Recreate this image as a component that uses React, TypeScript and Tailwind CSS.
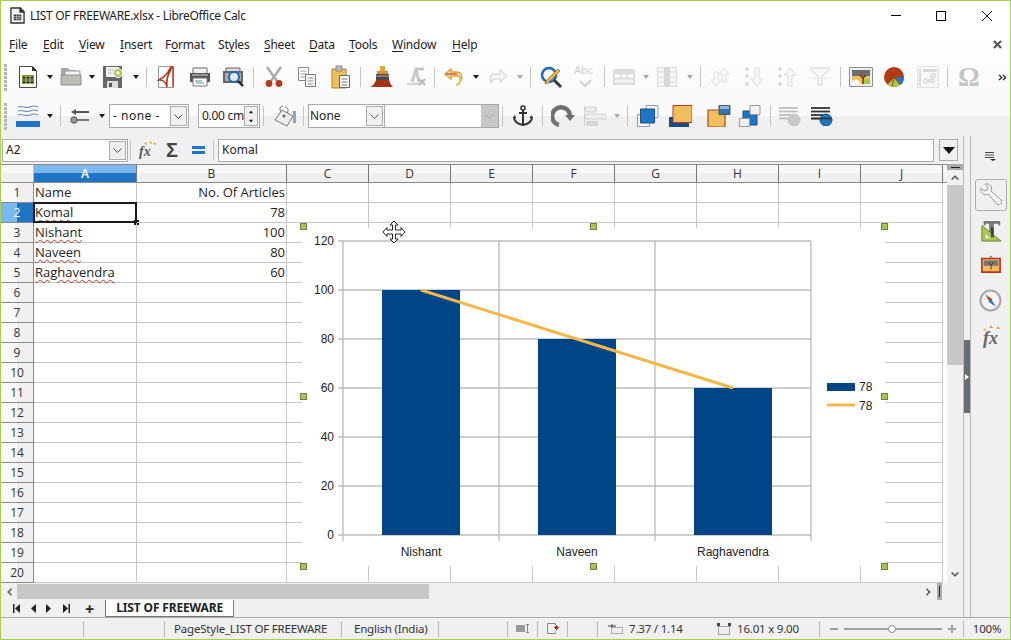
import React from "react";

type P = { className?: string };

const ui = "font-['Noto_Sans','Open_Sans',sans-serif]";

function Caret({ className = "", off = false }: P & { off?: boolean }) {
  return (
    <svg viewBox="0 0 6 4" className={`w-[6px] h-[4px] shrink-0 ${className}`}>
      <path d="M0 0h6L3 4z" fill={off ? "#a8a8a8" : "#1a1a1a"} />
    </svg>
  );
}

function Sep({ className = "" }: P) {
  return <div className={`w-px h-[20px] bg-[#c4c4c4] shrink-0 ${className}`} />;
}

function Grip() {
  return (
    <div className="flex flex-col gap-[1px] w-[3px] ml-[3px] shrink-0">
      {[0, 1, 2, 3, 4, 5, 6].map((i) => (
        <div key={i} className="h-[3px] bg-[#b5b5b5]" />
      ))}
    </div>
  );
}

function Ico({ className = "", vb = "0 0 24 24", children }: P & { vb?: string; children: React.ReactNode }) {
  return (
    <svg viewBox={vb} className={`shrink-0 ${className}`}>
      {children}
    </svg>
  );
}

// toolbar 1
const NewDoc = ({ className }: P) => (
  <Ico className={className} vb="0 0 20 24">
    <path d="M1.5 1.5h13l4 4v17h-17z" fill="#fff" stroke="#4a4a4a" />
    <path d="M14 1l5 5h-5z" fill="#333" />
    <path d="M4 10h12v9H4z" fill="#7b9a2e" />
    <path d="M5 12h10v6H5z" fill="#222" />
    <path d="M5 14h10M5 16h10M8 11v8M12 11v8" stroke="#cfe08f" strokeWidth=".8" />
  </Ico>
);
const Folder = ({ className }: P) => (
  <Ico className={className} vb="0 0 22 22">
    <path d="M1 2h7l2 2h6v14H1z" fill="#a8a8a8" />
    <path d="M5 5h15v6H5z" fill="#f4f4f4" stroke="#9a9a9a" />
    <path d="M1 9h20v10H1z" fill="#bcbcb4" stroke="#8f8f8f" />
  </Ico>
);
const Save = ({ className }: P) => (
  <Ico className={className} vb="0 0 24 24">
    <path d="M1 1h19v22H1z" fill="#666" />
    <path d="M4 2h13v10H4z" fill="#f2f2f2" />
    <path d="M6 5h9M6 8h5" stroke="#bbb" />
    <path d="M5 16h11v7H5z" fill="#ddd" />
    <path d="M7 18h3v4H7z" fill="#555" />
    <circle cx="16" cy="8" r="4.5" fill="#a6c84a" stroke="#fff" />
    <circle cx="16" cy="8" r="1.8" fill="#fff" />
  </Ico>
);
const Pdf = ({ className }: P) => (
  <Ico className={className} vb="0 0 20 24">
    <path d="M1.5 1.5h15v21h-15z" fill="#fff" stroke="#999" />
    <path d="M14 2C10 9 9 11 2 15c5 0 7 2 8 7-1-8 1-12 5-20z" fill="#fbeee8" stroke="#b1351a" strokeWidth="1.6" />
    <path d="M16 2v20" stroke="#c8391a" strokeWidth="1.5" />
  </Ico>
);
const Printer = ({ className }: P) => (
  <Ico className={className} vb="0 0 22 22">
    <path d="M4 2h14v7H4z" fill="#f3f3f3" stroke="#666" />
    <path d="M1 7h20v9H1z" fill="#555" />
    <path d="M3 8h16v2H3z" fill="#999" />
    <path d="M4 12h14v8H4z" fill="#fff" stroke="#777" />
    <path d="M6 15h7M7 17h8" stroke="#5d8f9e" />
  </Ico>
);
const Preview = ({ className }: P) => (
  <Ico className={className} vb="0 0 22 22">
    <path d="M4 2h14v6H4z" fill="#ddd" stroke="#666" />
    <path d="M1 5h20v12H1z" fill="#666" />
    <path d="M3 7h16v8H3z" fill="#a9a9a9" />
    <circle cx="12" cy="11" r="5" fill="#dfeaf2" stroke="#1d6cb5" strokeWidth="2" />
    <path d="M16 15l5 5" stroke="#222" strokeWidth="2.4" />
  </Ico>
);
const Scissors = ({ className }: P) => (
  <Ico className={className} vb="0 0 20 22">
    <path d="M3 1l10 14M17 1L7 15" stroke="#a9a9a9" strokeWidth="2.4" />
    <circle cx="5" cy="17.5" r="3.4" fill="#b6391a" />
    <circle cx="15" cy="17.5" r="3.4" fill="#b6391a" />
  </Ico>
);
const Copy = ({ className }: P) => (
  <Ico className={className} vb="0 0 20 22">
    <path d="M1.5 1.5h10v13h-10z" fill="#fff" stroke="#8a8a8a" />
    <path d="M3.5 5h6M3.5 8h6M3.5 11h6" stroke="#9a9a9a" />
    <path d="M8.5 8.5h10v12h-10z" fill="#fff" stroke="#777" />
    <path d="M10.5 12h6M10.5 15h6M10.5 18h6" stroke="#888" />
  </Ico>
);
const Paste = ({ className }: P) => (
  <Ico className={className} vb="0 0 20 24">
    <path d="M1 4h14v19H1z" fill="#f2bd5b" stroke="#b8862c" />
    <path d="M5 1h6v5H5z" fill="#bbb" stroke="#888" />
    <path d="M8.5 10.5h10v12h-10z" fill="#fff" stroke="#666" />
    <path d="M10.5 14h6M10.5 17h6M10.5 20h6" stroke="#777" />
  </Ico>
);
const Brush = ({ className }: P) => (
  <Ico className={className} vb="0 0 24 24">
    <path d="M10 1h5v5h-5z" fill="#e5a63c" />
    <path d="M7 6h11v3H7z" fill="#d98f2e" />
    <path d="M6 9h13v6H6z" fill="#4a4a4a" />
    <path d="M6 11h13" stroke="#aaa" />
    <path d="M6 15h13c1 3 2 5 4 7H0c3-1 5-4 6-7z" fill="#a83215" />
  </Ico>
);
const ClearFmt = ({ className }: P) => (
  <Ico className={className} vb="0 0 22 22">
    <path d="M7 16L11 3h8M11 3l3 13" stroke="#c8c8c8" strokeWidth="3" fill="none" />
    <path d="M2 18h12" stroke="#d4d4d4" strokeWidth="2.5" />
    <path d="M14 13l6 6M20 13l-6 6" stroke="#bbb" strokeWidth="2.4" />
  </Ico>
);
const Undo = ({ className }: P) => (
  <Ico className={className} vb="0 0 22 22">
    <path d="M8 3L2 8l6 5V10h6c3 0 4 2 4 5 2-4 1-9-5-9H8z" fill="#fbe7b8" stroke="#e0a23a" strokeWidth="1.4" />
    <path d="M3 8h11" stroke="#c8391a" strokeWidth="1.2" />
    <path d="M17 12a5 5 0 0 1-4 7" stroke="#dfc04a" strokeWidth="2" fill="none" />
  </Ico>
);
const Redo = ({ className }: P) => (
  <Ico className={className} vb="0 0 22 22">
    <path d="M13 4l7 6-7 6v-3H8c-2 0-3 1-4 4-2-4-1-9 4-9h5z" fill="#f5f5f5" stroke="#dedede" strokeWidth="1.4" />
  </Ico>
);
const Find = ({ className }: P) => (
  <Ico className={className} vb="0 0 22 22">
    <circle cx="9" cy="9" r="7" fill="#f7fafc" stroke="#1d6cb5" strokeWidth="2.6" />
    <path d="M14 14l7 7" stroke="#333" strokeWidth="2.8" />
    <path d="M6 15L18 3l2 2L8 17l-3 1z" fill="#f0b545" stroke="#9c6b1d" strokeWidth=".8" />
  </Ico>
);
const Spell = ({ className }: P) => (
  <div className={`relative shrink-0 ${className}`}>
    <span className="absolute top-[-1px] left-0 font-['Liberation_Sans',sans-serif] text-[11px] leading-none text-[#cfcfcf]">Abc</span>
    <svg viewBox="0 0 22 10" className="absolute left-0 bottom-0 w-[22px] h-[10px]">
      <path d="M6 3l5 5 6-6" stroke="#d0d0d0" strokeWidth="2" fill="none" />
    </svg>
  </div>
);
const RowsIco = ({ className }: P) => (
  <Ico className={className} vb="0 0 22 16">
    <path d="M0 0h22v16H0z" fill="#dcdcdc" />
    <path d="M2 5.5h5v3H2zM8.5 5.5h5v3h-5zM15 5.5h5v3h-5z" fill="#fff" />
    <path d="M2 10.5h18v3H2z" fill="#f4f4f4" />
  </Ico>
);
const ColsIco = ({ className }: P) => (
  <Ico className={className} vb="0 0 20 20">
    <path d="M.5 .5h19v19H.5z" fill="#f6f6f6" stroke="#dadada" />
    <path d="M7 0h6v20H7z" fill="#d8d8d8" />
    <path d="M0 5h20M0 10h20M0 15h20" stroke="#dadada" />
  </Ico>
);
const SortAB = ({ className }: P) => (
  <Ico className={className} vb="0 0 20 20">
    <path d="M6 19l-5-6h3V5h4v8h3zM14 1l5 6h-3v8h-4V7H9z" fill="#f8f8f8" stroke="#dedede" />
  </Ico>
);
const SortOne = ({ className, up = false }: P & { up?: boolean }) => (
  <Ico className={className} vb="0 0 20 22">
    <circle cx="3" cy="3" r="2" fill="#dcdcdc" />
    <circle cx="3" cy="10" r="2" fill="#dcdcdc" />
    <circle cx="3" cy="18" r="2" fill="#dcdcdc" />
    <path d={up ? "M13 2l6 7h-4v11h-4V9H7z" : "M13 20l6-7h-4V2h-4v11H7z"} fill="#f8f8f8" stroke="#dedede" />
  </Ico>
);
const Funnel = ({ className }: P) => (
  <Ico className={className} vb="0 0 22 20">
    <path d="M1 1h20l-8 9v8h-4v-8z" fill="#f8f8f8" stroke="#d4d4d4" />
    <path d="M0 11h22" stroke="#ccc" strokeDasharray="1 2" />
  </Ico>
);
const ImageIco = ({ className }: P) => (
  <Ico className={className} vb="0 0 24 20">
    <path d="M.5 .5h23v19H.5z" fill="#eee" stroke="#8f8f8f" />
    <path d="M3 3h18v14H3z" fill="#6d6d6d" />
    <path d="M3 9h18v8H3z" fill="#f2bd5b" />
    <path d="M3 14l5-2 4 5H3z" fill="#fff" />
    <path d="M14 17V11l-3-3M14 11l3-3" stroke="#7b2410" strokeWidth="1.5" fill="none" />
    <path d="M15 12h6v5h-6z" fill="#a6c84a" />
  </Ico>
);
const Pie = ({ className }: P) => (
  <Ico className={className} vb="0 0 20 20">
    <circle cx="10" cy="10" r="10" fill="#b23a14" />
    <path d="M11 10h9c0 3-1 6-3 8z" fill="#2574c0" />
    <path d="M10 11l6 7c-3 2-5 2-7 2z" fill="#a6c84a" />
    <path d="M9 12l-1 8-5-2z" fill="#a6c84a" />
  </Ico>
);
const Pivot = ({ className }: P) => (
  <Ico className={className} vb="0 0 22 22">
    <path d="M.5 .5h21v21H.5z" fill="#f7f7f7" stroke="#e0e0e0" />
    <path d="M6 3h14v3H6zM2 3h2v17H2z" fill="#dcdcdc" />
    <path d="M9 18l-3-3 3-3v2h6v-4h-2l3-3 3 3h-2v6H9z" fill="#f4f4f4" stroke="#cfcfcf" />
  </Ico>
);

// toolbar 2
const Borders = ({ className }: P) => (
  <Ico className={className} vb="0 0 24 22">
    <path d="M2 2c4-2 8 2 12 0s6-1 8 0M2 6c4-2 8 2 12 0s6-1 8 0M2 10c4-2 8 2 12 0s6-1 8 0" stroke="#6b8bb0" strokeWidth="1.2" fill="none" />
    <path d="M0 16h24v6H0z" fill="#1f75c4" />
  </Ico>
);
const LineArrow = ({ className }: P) => (
  <Ico className={className} vb="0 0 20 16">
    <path d="M1 4l5-3v2h13v2H6v2z" fill="#555" />
    <path d="M6 11h13v2H6z" fill="#777" />
    <circle cx="4" cy="12" r="3.2" fill="#999" stroke="#555" />
  </Ico>
);
const Bucket = ({ className }: P) => (
  <Ico className={className} vb="0 0 24 24">
    <path d="M10 2c-3 0-4 3-2 6M12 3c3 0 4 3 2 6" stroke="#777" fill="none" />
    <path d="M9 6l11 6-6 10L2 16z" fill="#eee" stroke="#777" />
    <circle cx="11" cy="12" r="1.5" fill="#666" />
    <path d="M20 7h3v12h-3z" fill="#8ba7c4" />
  </Ico>
);
const Anchor = ({ className }: P) => (
  <Ico className={className} vb="0 0 20 22">
    <circle cx="10" cy="3" r="2" fill="none" stroke="#333" strokeWidth="1.6" />
    <path d="M10 5v15M6 8h8" stroke="#333" strokeWidth="2" />
    <path d="M1 12c0 5 4 7 9 8 5-1 9-3 9-8" stroke="#333" strokeWidth="2" fill="none" />
    <path d="M0 13l1.5-3 2 3zM20 13l-1.5-3-2 3z" fill="#333" />
  </Ico>
);
const Rotate = ({ className }: P) => (
  <Ico className={className} vb="0 0 24 22">
    <path d="M8 20A9 9 0 1 1 19 10" stroke="#6f6f6f" strokeWidth="4.4" fill="none" />
    <path d="M14 10h10l-5 6z" fill="#6f6f6f" />
  </Ico>
);
const AlignIco = ({ className }: P) => (
  <Ico className={className} vb="0 0 22 20">
    <path d="M.5 0v20" stroke="#d0d0d0" />
    <path d="M2 1h10v5H2z" fill="#eee" stroke="#cfcfcf" />
    <path d="M2 8h20v5H2z" fill="#eee" stroke="#cfcfcf" />
    <path d="M2 15h12v5H2z" fill="#d4d4d4" />
  </Ico>
);
const Front = ({ className }: P) => (
  <Ico className={className} vb="0 0 22 22">
    <path d="M9 .5h12v12H9zM.5 9.5h12v12H.5z" fill="#f4f4f4" stroke="#9a9a9a" />
    <path d="M3.5 4h14v14h-14z" fill="#1f75c4" stroke="#174f85" />
  </Ico>
);
const Forward = ({ className }: P) => (
  <Ico className={className} vb="0 0 24 22">
    <path d="M1 12h20v10H1z" fill="#174f85" />
    <path d="M5 .5h19v17H5z" fill="#f2bd5b" stroke="#b5401a" />
  </Ico>
);
const Backward = ({ className }: P) => (
  <Ico className={className} vb="0 0 24 22">
    <path d="M1 5h17v17H1z" fill="#f2bd5b" stroke="#b5401a" strokeWidth="1.2" />
    <path d="M12 .5h11v9H12z" fill="#2b75b5" stroke="#555" />
    <path d="M13 1h9v3h-9z" fill="#8bb8de" />
  </Ico>
);
const BackIco = ({ className }: P) => (
  <Ico className={className} vb="0 0 22 22">
    <path d="M4 6h14v14H4z" fill="#1f75c4" stroke="#174f85" />
    <path d="M11 .5h10v9H11zM.5 13.5h10v8H.5z" fill="#f2f2f2" stroke="#9a9a9a" />
  </Ico>
);
const TextRound = ({ className, on = false }: P & { on?: boolean }) => (
  <Ico className={className} vb="0 0 24 20">
    {[2, 5.5, 9, 12.5].map((y, i) => (
      <path key={i} d={`M0 ${y}h${i > 1 ? 13 : 19}`} stroke={on ? "#333" : "#bdbdbd"} strokeWidth="1.8" />
    ))}
    <circle cx="15" cy="14" r="6" fill={on ? "#1f75c4" : "#c8c8c8"} stroke={on ? "#174f85" : "#c8c8c8"} />
    {on && <path d="M0 12.5h20" stroke="#333" strokeWidth="1.6" />}
  </Ico>
);

const Chevron = ({ color = "#555" }: { color?: string }) => (
  <svg viewBox="0 0 9 5" className="w-[9px] h-[5px]">
    <path d="M.5 .5l4 4 4-4" stroke={color} fill="none" />
  </svg>
);

const menu = [
  ["w-[34px]", "", "F", "ile"],
  ["w-[36px]", "", "E", "dit"],
  ["w-[41px]", "", "V", "iew"],
  ["w-[45px]", "", "I", "nsert"],
  ["w-[53px]", "F", "o", "rmat"],
  ["w-[46px]", "St", "y", "les"],
  ["w-[45px]", "", "S", "heet"],
  ["w-[40px]", "", "D", "ata"],
  ["w-[43px]", "", "T", "ools"],
  ["w-[60px]", "", "W", "indow"],
  ["w-[40px]", "", "H", "elp"],
];

const colWidths = ["w-[103px]", "w-[150px]", "w-[82px]", "w-[82px]", "w-[82px]", "w-[82px]", "w-[82px]", "w-[82px]", "w-[82px]", "w-[82px]"];
const colNames = ["A", "B", "C", "D", "E", "F", "G", "H", "I", "J"];
const rowsData: Record<number, [string, string]> = {
  1: ["Name", "No. Of Articles"],
  2: ["Komal", "78"],
  3: ["Nishant", "100"],
  4: ["Naveen", "80"],
  5: ["Raghavendra", "60"],
};

function Chart() {
  const ys = [241, 290, 339, 388, 437, 486, 535];
  const labels = ["120", "100", "80", "60", "40", "20", "0"];
  return (
    <svg viewBox="302 228 583 338" className="w-[583px] h-[338px] block font-['Liberation_Sans',sans-serif]">
      {ys.map((y, i) => (
        <g key={y}>
          <path d={`M338 ${y}H811`} stroke="#bdbdbd" strokeWidth="1.5" />
          <text x="334" y={y + 4} textAnchor="end" fontSize="12" fill="#222">
            {labels[i]}
          </text>
        </g>
      ))}
      {[343, 499, 655, 811].map((x) => (
        <path key={x} d={`M${x} 241V541`} stroke="#b3b3b3" strokeWidth="1.2" />
      ))}
      <rect x="382" y="290" width="78" height="245" fill="#004586" />
      <rect x="538" y="339" width="78" height="196" fill="#004586" />
      <rect x="694" y="388" width="78" height="147" fill="#004586" />
      <path d="M421 290L733 388" stroke="#f2b84b" strokeWidth="3" />
      <text x="421" y="556" textAnchor="middle" fontSize="12" fill="#222">Nishant</text>
      <text x="577" y="556" textAnchor="middle" fontSize="12" fill="#222">Naveen</text>
      <text x="733" y="556" textAnchor="middle" fontSize="12" fill="#222">Raghavendra</text>
      <rect x="827" y="383" width="28" height="8" fill="#004586" />
      <path d="M827 405H855" stroke="#f2b84b" strokeWidth="3" />
      <text x="859" y="391" fontSize="12" fill="#222">78</text>
      <text x="859" y="410" fontSize="12" fill="#222">78</text>
    </svg>
  );
}

function Handle({ className = "" }: P) {
  return <div className={`absolute w-[7px] h-[7px] bg-[#a5c84a] border border-[#6f7f45] ${className}`} />;
}

export default function App() {
  return (
    <div className={`relative w-[1011px] h-[640px] overflow-hidden flex flex-col bg-white border border-[#a9cf4d] text-[#222] ${ui}`}>
      {/* title bar */}
      <div className="h-[29px] flex items-center shrink-0 relative">
        <svg viewBox="0 0 16 18" className="w-[15px] h-[17px] ml-[9px] shrink-0">
          <path d="M1 1h10l4 4v12H1z" fill="#f4f4f4" stroke="#333" strokeWidth="1.4" />
          <path d="M10 0l6 6h-6z" fill="#333" />
          <path d="M4 8h8v6H4z" fill="#333" />
          <path d="M4 10h8M4 12h8M7 8v6M9.5 8v6" stroke="#e8e8e8" strokeWidth=".6" />
        </svg>
        <span className="ml-[5px] text-[12px] tracking-[-0.3px]">LIST OF FREEWARE.xlsx - LibreOffice Calc</span>
        <div className="ml-auto flex items-center mr-[18px]">
          <div className="w-[10px] h-px bg-black" />
          <div className="ml-[35px] w-[10px] h-[10px] border border-black" />
          <svg viewBox="0 0 10 10" className="ml-[36px] w-[10px] h-[10px]">
            <path d="M0 0l10 10M10 0L0 10" stroke="#222" />
          </svg>
        </div>
      </div>

      {/* menu bar */}
      <div className="h-[28px] flex items-center shrink-0 pl-[8px] pt-px text-[12px] tracking-[-0.2px] bg-[linear-gradient(#fff,#fdfdfd)]">
        {menu.map(([w, a, u, b]) => (
          <div key={u + b} className={w}>
            {a}
            <span className="underline underline-offset-2">{u}</span>
            {b}
          </div>
        ))}
        <svg viewBox="0 0 10 10" className="w-[9px] h-[9px] ml-auto mr-[8px]">
          <path d="M1 1l8 8M9 1L1 9" stroke="#555" strokeWidth="2.4" />
        </svg>
      </div>

      {/* standard toolbar */}
      <div className="h-[38px] flex items-center shrink-0 bg-[linear-gradient(#fdfdfd,#fafafa)]">
        <Grip />
        <NewDoc className="w-[20px] h-[24px] ml-[11px]" />
        <Caret className="ml-[9px]" />
        <Folder className="w-[22px] h-[22px] ml-[7px]" />
        <Caret className="ml-[7px]" />
        <Save className="w-[24px] h-[24px] ml-[7px]" />
        <Caret className="ml-[7px]" />
        <Sep className="ml-[7px]" />
        <Pdf className="w-[20px] h-[24px] ml-[10px]" />
        <Printer className="w-[22px] h-[22px] ml-[12px]" />
        <Preview className="w-[22px] h-[22px] ml-[11px]" />
        <Sep className="ml-[9px]" />
        <Scissors className="w-[20px] h-[22px] ml-[10px]" />
        <Copy className="w-[20px] h-[22px] ml-[13px]" />
        <Paste className="w-[20px] h-[24px] ml-[14px]" />
        <Sep className="ml-[9px]" />
        <Brush className="w-[24px] h-[24px] ml-[9px]" />
        <ClearFmt className="w-[22px] h-[22px] ml-[11px]" />
        <Sep className="ml-[7px]" />
        <Undo className="w-[22px] h-[22px] ml-[8px]" />
        <Caret className="ml-[8px]" />
        <Redo className="w-[22px] h-[22px] ml-[8px]" />
        <Caret off className="ml-[8px]" />
        <Sep className="ml-[7px]" />
        <Find className="w-[22px] h-[22px] ml-[9px]" />
        <Spell className="w-[22px] h-[22px] ml-[12px]" />
        <Sep className="ml-[8px]" />
        <RowsIco className="w-[22px] h-[16px] ml-[8px]" />
        <Caret off className="ml-[8px]" />
        <ColsIco className="w-[20px] h-[20px] ml-[8px]" />
        <Caret off className="ml-[10px]" />
        <Sep className="ml-[7px]" />
        <SortAB className="w-[20px] h-[20px] ml-[9px]" />
        <SortOne className="w-[20px] h-[22px] ml-[14px]" />
        <SortOne up className="w-[20px] h-[22px] ml-[13px]" />
        <Funnel className="w-[22px] h-[20px] ml-[12px]" />
        <Sep className="ml-[9px]" />
        <ImageIco className="w-[24px] h-[20px] ml-[8px]" />
        <Pie className="w-[20px] h-[20px] ml-[11px]" />
        <Pivot className="w-[22px] h-[22px] ml-[13px]" />
        <Sep className="ml-[8px]" />
        <div className="ml-[10px] w-[20px] text-center font-['Liberation_Serif',serif] font-bold text-[27px] leading-none text-[#c4c4c4]">Ω</div>
        <svg viewBox="0 0 10 8" className="ml-[20px] w-[9px] h-[7px] shrink-0">
          <path d="M1 1l3 3-3 3M5.5 1l3 3-3 3" stroke="#222" strokeWidth="1.5" fill="none" />
        </svg>
      </div>

      {/* format toolbar */}
      <div className="h-[40px] flex items-center shrink-0 bg-[linear-gradient(#fafafa_50%,#f0f0f0_50%)]">
        <Grip />
        <Borders className="w-[24px] h-[22px] ml-[9px]" />
        <Caret className="ml-[7px]" />
        <Sep className="ml-[7px]" />
        <LineArrow className="w-[20px] h-[16px] ml-[9px]" />
        <Caret className="ml-[9px]" />
        <div className="ml-[4px] w-[80px] h-[24px] flex items-center justify-between bg-white border border-[#a8a8a8] pl-[3px] text-[12px] tracking-[0.5px]">
          - none -
          <div className="w-[17px] h-[20px] mr-px bg-[#f0f0f0] border border-[#aaa] flex items-center justify-center">
            <Chevron />
          </div>
        </div>
        <div className="ml-[9px] w-[62px] h-[24px] flex items-center bg-white border border-[#a8a8a8] pl-[3px] text-[12px]">
          <span className="whitespace-nowrap tracking-[-0.3px]">0.00 cm</span>
          <div className="w-[15px] h-[20px] ml-auto mr-px bg-[#f0f0f0] border border-[#aaa] flex flex-col items-center justify-around">
            <Caret className="rotate-180 scale-75" />
            <Caret className="scale-75" />
          </div>
        </div>
        <Sep className="ml-[3px]" />
        <Bucket className="w-[24px] h-[24px] ml-[9px]" />
        <Sep className="ml-[6px]" />
        <div className="ml-[4px] w-[77px] h-[24px] flex items-center justify-between bg-white border border-[#a8a8a8] pl-px text-[12px]">
          None
          <div className="w-[17px] h-[20px] mr-px bg-[#f0f0f0] border border-[#aaa] flex items-center justify-center">
            <Chevron />
          </div>
        </div>
        <div className="w-[114px] h-[24px] flex justify-end bg-white border border-[#a8a8a8] border-l-0">
          <div className="w-[17px] h-full bg-[#c8c7c5] flex items-center justify-center">
            <Chevron color="#aaa" />
          </div>
        </div>
        <Sep className="ml-[3px]" />
        <Anchor className="w-[20px] h-[22px] ml-[10px]" />
        <Sep className="ml-[9px]" />
        <Rotate className="w-[24px] h-[22px] ml-[8px]" />
        <AlignIco className="w-[22px] h-[20px] ml-[9px]" />
        <Caret off className="ml-[8px]" />
        <Sep className="ml-[7px]" />
        <Front className="w-[22px] h-[22px] ml-[9px]" />
        <Forward className="w-[24px] h-[22px] ml-[9px]" />
        <Backward className="w-[24px] h-[22px] ml-[15px]" />
        <BackIco className="w-[22px] h-[22px] ml-[8px]" />
        <Sep className="ml-[9px]" />
        <TextRound className="w-[24px] h-[20px] ml-[8px]" />
        <TextRound on className="w-[24px] h-[20px] ml-[8px]" />
      </div>

      {/* body */}
      <div className="flex-1 flex min-h-0">
        <div className="w-[962px] flex flex-col shrink-0">
          {/* formula bar */}
          <div className="h-[28px] flex items-center shrink-0 bg-[#f0f0f0] text-[12px]">
            <div className="ml-px w-[126px] h-[23px] flex items-center justify-between bg-white border border-[#aaa] pl-[3px]">
              A2
              <div className="w-[17px] h-[19px] mr-px bg-[#f0f0f0] border border-[#aaa] flex items-center justify-center">
                <Chevron />
              </div>
            </div>
            <Sep className="ml-[2px]" />
            <div className="relative ml-[8px] w-[17px] h-[19px] font-['Liberation_Serif',serif] italic font-bold text-[14px] leading-[22px] text-[#555]">
              fx
              <svg viewBox="0 0 14 6" className="absolute w-[14px] h-[6px] top-0 right-0"><path d="M2 3l2-2 1 3zM7 2l2-2 1 3zM11 3l2-2 1 3z" fill="#e0a93c" /></svg>
            </div>
            <div className="ml-[10px] w-[13px] text-[20px] leading-none font-bold text-[#444] font-['Liberation_Sans',sans-serif]">Σ</div>
            <svg viewBox="0 0 13 8" className="ml-[13px] w-[13px] h-[8px] shrink-0">
              <path d="M0 0h13v3H0zM0 5h13v3H0z" fill="#1f75c4" />
            </svg>
            <Sep className="ml-[8px]" />
            <div className="ml-[4px] w-[716px] h-[23px] flex items-center bg-white border border-[#aaa] pl-[3px]">Komal</div>
            <div className="ml-[5px] w-[19px] h-[22px] border border-[#aaa] flex items-center justify-center">
              <svg viewBox="0 0 12 7" className="w-[12px] h-[7px]"><path d="M0 0h12L6 7z" fill="#111" /></svg>
            </div>
          </div>

          {/* sheet */}
          <div className="h-[419px] flex shrink-0">
            <div className="relative w-[946px] shrink-0 bg-white text-[13px] font-['Open_Sans',sans-serif]">
              {/* column headers */}
              <div className="flex h-[19px] border-y border-[#8a8a8a] bg-[linear-gradient(#f8f8f8_50%,#f0f0f0_50%)] text-[12px] text-[#333]">
                <div className="w-[33px] border-r border-[#bbb]" />
                {colNames.map((n, i) => (
                  <div
                    key={n}
                    className={`${colWidths[i]} flex items-center justify-center border-r border-[#777] ${n === "A" ? "text-white bg-[linear-gradient(#7ab8ee_45%,#1f75c4_45%)] font-semibold" : ""}`}
                  >
                    {n}
                  </div>
                ))}
              </div>
              {/* rows */}
              {Array.from({ length: 20 }, (_, r) => r + 1).map((r) => (
                <div key={r} className="flex h-[20px]">
                  <div
                    className={`w-[33px] border-r border-b border-[#8a8a8a] flex items-center justify-center text-[12px] ${r === 2 ? "text-white bg-[linear-gradient(90deg,#7ab8ee_50%,#1f75c4_50%)]" : "text-[#333] bg-[linear-gradient(90deg,#f8f8f8_50%,#f0f0f0_50%)]"}`}
                  >
                    {r}
                  </div>
                  {colWidths.map((w, c) => (
                    <div key={c} className={`${w} relative h-[20px] border-r border-b border-[#c8c8c8] flex items-center pl-[1px] pr-[1px] whitespace-nowrap ${c === 1 ? "justify-end" : ""}`}>
                      {c === 0 && rowsData[r] && (
                        <span className={r > 1 ? "underline decoration-wavy decoration-[#c0341a] decoration-1 underline-offset-2" : ""}>{rowsData[r][0]}</span>
                      )}
                      {c === 1 && rowsData[r] && <span>{rowsData[r][1]}</span>}
                      {c === 0 && r === 2 && (
                        <>
                          <div className="absolute left-[-1px] top-[-1px] w-[104px] h-[21px] border-2 border-[#1b1b1b]" />
                          <div className="absolute right-[-3px] bottom-[-3px] w-[5px] h-[5px] bg-[#1b1b1b]" />
                        </>
                      )}
                    </div>
                  ))}
                </div>
              ))}

              {/* embedded chart */}
              <div className="absolute left-[301px] top-[64px] bg-white">
                <Chart />
              </div>
              <Handle className="left-[299px] top-[59px]" />
              <Handle className="left-[589px] top-[59px]" />
              <Handle className="left-[880px] top-[59px]" />
              <Handle className="left-[299px] top-[229px]" />
              <Handle className="left-[880px] top-[229px]" />
              <Handle className="left-[299px] top-[399px]" />
              <Handle className="left-[589px] top-[399px]" />
              <Handle className="left-[880px] top-[399px]" />
              <svg viewBox="0 0 24 24" className="absolute left-[381px] top-[56px] w-[24px] h-[24px]">
                <path d="M12 1l4 4h-2.5v5H19V7.5l4 4.5-4 4.5V14h-5.5v5H16l-4 4-4-4h2.5v-5H5v2.5L1 12l4-4.5V10h5.5V5H8z" fill="#fff" stroke="#222" />
              </svg>
            </div>
            {/* vertical scrollbar */}
            <div className="w-[16px] shrink-0 flex flex-col bg-[#f0f0f0] relative">
              <div className="h-[6px] bg-[#a8a8a8] flex items-center justify-center">
                <div className="w-[9px] h-px bg-[#222]" />
              </div>
              <div className="h-[15px] flex items-center justify-center">
                <svg viewBox="0 0 9 6" className="w-[8px] h-[5px]"><path d="M.5 5.5L4.5 1.5l4 4" stroke="#555" strokeWidth="1.8" fill="none" /></svg>
              </div>
              <div className="h-[180px] bg-[#c8c7c5]" />
              <div className="mt-auto h-[17px] flex items-center justify-center">
                <svg viewBox="0 0 9 6" className="w-[8px] h-[5px]"><path d="M.5 .5L4.5 4.5l4-4" stroke="#555" strokeWidth="1.8" fill="none" /></svg>
              </div>
            </div>
          </div>

          {/* horizontal scrollbar */}
          <div className="h-[17px] flex items-center shrink-0 bg-[#f0f0f0]">
            <div className="w-[16px] flex justify-center">
              <svg viewBox="0 0 6 9" className="w-[5px] h-[8px]"><path d="M5.5 .5l-4 4 4 4" stroke="#555" strokeWidth="1.8" fill="none" /></svg>
            </div>
            <div className="w-[412px] h-[15px] bg-[#c8c7c5]" />
            <div className="ml-auto mr-[21px] flex items-center gap-[6px]">
              <svg viewBox="0 0 6 9" className="w-[5px] h-[8px]"><path d="M.5 .5l4 4-4 4" stroke="#555" strokeWidth="1.8" fill="none" /></svg>
              <div className="w-[5px] h-[17px] bg-[#aaa] flex justify-center"><div className="w-px h-[11px] mt-[3px] bg-[#222]" /></div>
            </div>
          </div>

          {/* sheet tabs */}
          <div className="h-[17px] flex items-center shrink-0 bg-[#f0f0f0]">
            <svg viewBox="0 0 60 9" className="ml-[12px] w-[60px] h-[9px] shrink-0">
              <path d="M0 0h1.5v9H0zM7 0v9L2 4.5zM23 0v9l-5-4.5zM33 0v9l5-4.5zM50 0v9l5-4.5zM55.5 0H57v9h-1.5z" fill="#222" />
            </svg>
            <div className="ml-[12px] text-[16px] font-bold leading-none text-[#222]">+</div>
            <div className="ml-[11px] w-[129px] h-[17px] bg-white border-x border-b border-[#777] flex items-center justify-center text-[12px] font-bold tracking-[-0.15px]">LIST OF FREEWARE</div>
          </div>
        </div>

        {/* sidebar dock handle */}
        <div className="w-[8px] shrink-0 border-x border-[#bbb] bg-[#f0f0f0] flex flex-col pt-[204px]">
          <div className="h-[73px] bg-[#6a6d70] flex items-center justify-center">
            <svg viewBox="0 0 4 6" className="w-[4px] h-[6px]"><path d="M0 0l4 3-4 3z" fill="#fff" /></svg>
          </div>
        </div>

        {/* sidebar */}
        <div className="flex-1 bg-[#f0f0f0] flex flex-col items-center">
          <svg viewBox="0 0 11 9" className="mt-[16px] w-[11px] h-[9px] shrink-0">
            <path d="M0 .5h9M0 3h9M0 5.5h9" stroke="#444" />
            <path d="M5 7h6l-3 2z" fill="#222" />
          </svg>
          <div className="mt-[18px] w-[32px] h-[32px] shrink-0 border border-[#aaa] rounded-[3px] flex items-center justify-center">
            <svg viewBox="0 0 24 24" className="w-[24px] h-[24px]">
              <path d="M2 5l3 3 3-1 1-3-3-3c5-1 8 3 6 7l10 9c2 3-2 6-4 4l-9-10c-4 2-8-1-7-6z" fill="#f4f4f4" stroke="#999" />
            </svg>
          </div>
          <svg viewBox="0 0 22 24" className="mt-[9px] w-[22px] h-[22px] shrink-0">
            <path d="M3 1h18v5h-2V4h-5v16h-5V4H5v2H3z" fill="#777" />
            <path d="M1 6v17h21z" fill="#a5c84a" stroke="#6f7f45" />
            <path d="M5 15v5h5z" fill="#f0f0f0" />
            <path d="M11 8h3v11h-3z" fill="#444" />
          </svg>
          <svg viewBox="0 0 22 22" className="mt-[12px] w-[22px] h-[20px] shrink-0">
            <path d="M9 5l2-3 2 3" stroke="#777" fill="none" />
            <path d="M1 5h20v15H1z" fill="#f2bd5b" stroke="#b5341a" strokeWidth="1.8" />
            <path d="M3 7h16v6H3z" fill="#777" />
            <path d="M11 17v-5l-3-3M11 12l3-3" stroke="#6d2210" fill="none" />
          </svg>
          <svg viewBox="0 0 22 22" className="mt-[15px] w-[23px] h-[23px] shrink-0">
            <circle cx="11" cy="11" r="9.5" fill="#f4f4f4" stroke="#a8a8a8" strokeWidth="2" />
            <path d="M6 5l7 5-3 2z" fill="#c8391a" />
            <path d="M16 17l-7-5 3-2z" fill="#1f75c4" />
          </svg>
          <div className="relative mt-[13px] w-[22px] h-[22px] shrink-0 font-['Liberation_Serif',serif] italic font-bold text-[18px] leading-[26px] text-[#666] text-center">
            fx
            <svg viewBox="0 0 20 8" className="absolute w-[20px] h-[8px] top-0 left-px"><path d="M2 5l2-2 1 3zM8 3l2-3 2 3zM15 4l2-3 2 3z" fill="#e0a93c" /></svg>
          </div>
        </div>
      </div>

      {/* status bar */}
      <div className="h-[22px] flex items-center shrink-0 bg-[#f0f0f0] border-t border-[#aaa] text-[11.5px] tracking-[-0.2px] text-[#333]">
        <div className="w-[83px] h-[16px] border-r border-[#bbb]" />
        <div className="w-[81px] h-[16px] border-r border-[#bbb]" />
        <div className="w-[177px] h-[16px] border-r border-[#bbb] flex items-center pl-[9px] whitespace-nowrap">PageStyle_LIST OF FREEWARE</div>
        <div className="w-[97px] h-[16px] border-r border-[#bbb] flex items-center pl-[12px] whitespace-nowrap">English (India)</div>
        <div className="w-[69px] h-[16px] border-r border-[#bbb]" />
        <div className="w-[30px] h-[16px] border-r border-[#bbb] flex items-center justify-center">
          <svg viewBox="0 0 13 9" className="w-[13px] h-[9px]"><path d="M0 1h9v7H0z" fill="#999" /><path d="M11.5 0v9M10 .5h3M10 8.5h3" stroke="#888" /></svg>
        </div>
        <div className="w-[30px] h-[16px] border-r border-[#bbb] flex items-center justify-center">
          <svg viewBox="0 0 12 11" className="w-[12px] h-[11px]"><path d="M.5 .5h8v2M.5 .5v10h8v-2" stroke="#888" fill="none" /><path d="M7 4.5h5M9.5 2.5v5M8 3l3 3M11 3L8 6" stroke="#b5341a" /></svg>
        </div>
        <div className="w-[30px] h-[16px] border-r border-[#bbb]" />
        <div className="w-[222px] h-[16px] border-r border-[#bbb] flex items-center whitespace-nowrap">
          <svg viewBox="0 0 15 10" className="ml-[10px] w-[15px] h-[10px] shrink-0"><path d="M4 0v4M0 2h8" stroke="#444" /><path d="M3.5 3.5h11v6h-11z" fill="none" stroke="#666" strokeDasharray="1 1" /></svg>
          <span className="ml-[6px] w-[88px]">7.37 / 1.14</span>
          <svg viewBox="0 0 14 12" className="w-[14px] h-[12px] shrink-0"><path d="M1.5 3.5h11v8h-11z" fill="none" stroke="#555" strokeDasharray="1 1" /><path d="M0 0h3v3H0zM11 0h3v3h-3z" fill="#444" /></svg>
          <span className="ml-[6px]">16.01 x 9.00</span>
        </div>
        <div className="w-[144px] h-[16px] border-r border-[#bbb] flex items-center relative">
          <div className="ml-[10px] w-[8px] h-[2px] bg-[#a0a0a0]" />
          <div className="ml-[6px] w-[98px] h-[2px] bg-[#a0a0a0]" />
          <div className="ml-[6px] w-[8px] h-[8px] relative">
            <div className="absolute inset-x-0 top-[3px] h-[2px] bg-[#a0a0a0]" />
            <div className="absolute inset-y-0 left-[3px] w-[2px] bg-[#a0a0a0]" />
          </div>
          <div className="absolute left-[68px] top-[4px] w-[8px] h-[8px] rounded-full bg-white border border-[#888]" />
        </div>
        <div className="flex-1 text-center">100%</div>
      </div>
    </div>
  );
}
